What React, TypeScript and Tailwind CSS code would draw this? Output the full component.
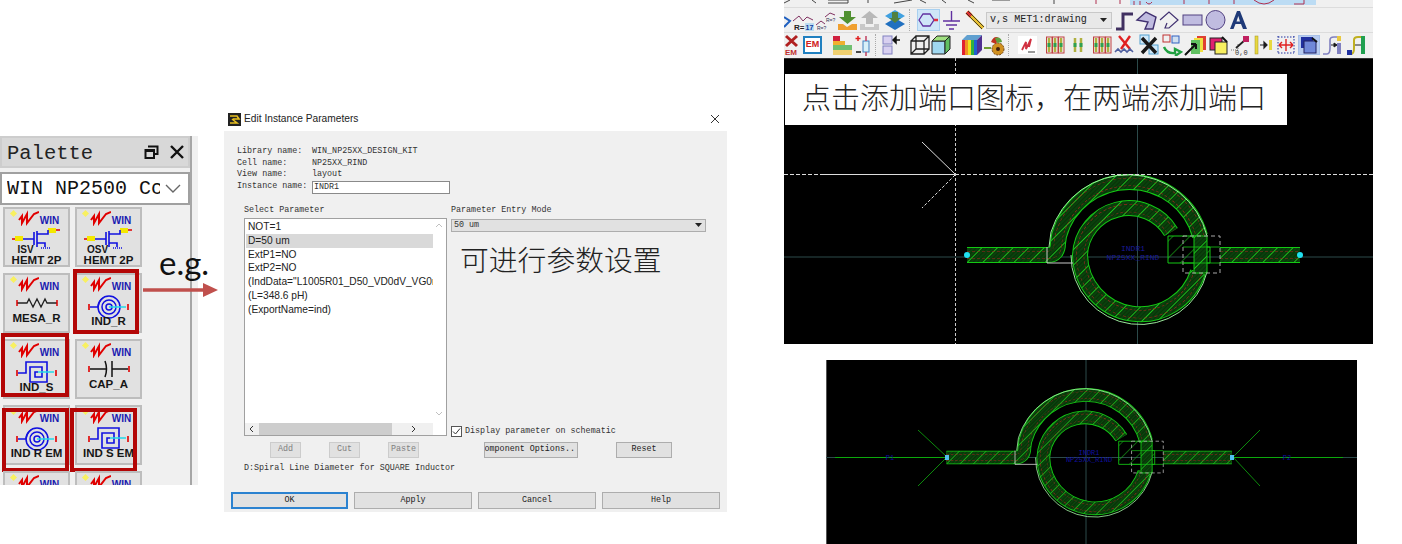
import React from "react";

const mono = "font-['Liberation_Mono',monospace]";
const sans = "font-['Liberation_Sans',sans-serif]";
const cjk = "font-['Liberation_Sans','Noto_Sans_CJK_SC',sans-serif]";

// --- PALETTE ---

function WinLogo() {
  return (
    <div className="flex h-[17px] items-end justify-center gap-[1px] pl-[4px]">
      <svg width="21" height="16" viewBox="0 0 21 16">
        <path d="M1 10 L4 6 L4 13 L9 4 L9 13 L16 4 L21 2" fill="none" stroke="#e00000" strokeWidth="2" />
      </svg>
      <span className={`${sans} text-[10px] leading-[11px] font-bold text-[#1a1ab0]`}>WIN</span>
    </div>
  );
}

function Symbol({ kind }: { kind: string }) {
  const blue = "#1010e0";
  if (kind === "hemt") {
    return (
      <svg width="50" height="24" viewBox="0 0 50 24">
        <rect x="3" y="9" width="8" height="5" fill="#f4e800" />
        <rect x="36" y="1" width="8" height="5" fill="#f4e800" />
        <path d="M11 12 H22 M22 5 V18 M25 4 V20 M25 7 H36 V3 M25 16 H33 V20" fill="none" stroke={blue} strokeWidth="1.6" />
        <path d="M29 21 H38" stroke={blue} strokeWidth="1.5" strokeDasharray="1 1" />
        <path d="M0 12 H3 M44 3 H48" stroke="#e00000" strokeWidth="1.5" />
      </svg>
    );
  }
  if (kind === "res") {
    return (
      <svg width="44" height="20" viewBox="0 0 44 20">
        <path d="M2 10 H12 L14 6 L18 14 L22 6 L26 14 L30 6 L32 10 H42" fill="none" stroke="#222" strokeWidth="1.3" />
        <path d="M2 7 V13 M42 7 V13" stroke="#e00000" strokeWidth="1.5" />
      </svg>
    );
  }
  if (kind === "cap") {
    return (
      <svg width="44" height="20" viewBox="0 0 44 20">
        <path d="M3 10 H19 M25 10 H41 M25 2 V18" fill="none" stroke="#111" strokeWidth="1.5" />
        <path d="M18 2 Q21 10 18 18" fill="none" stroke="#111" strokeWidth="1.5" />
        <path d="M2 7 V13 M42 7 V13" stroke="#e00000" strokeWidth="1.6" />
      </svg>
    );
  }
  if (kind === "spiral") {
    return (
      <svg width="44" height="26" viewBox="0 0 44 26">
        <path d="M3 14 H11 Q12 8 16 5" fill="none" stroke={blue} strokeWidth="1.5" />
        <circle cx="22" cy="14" r="11" fill="none" stroke={blue} strokeWidth="1.5" />
        <circle cx="22" cy="14" r="7" fill="none" stroke={blue} strokeWidth="1.5" />
        <circle cx="22" cy="14" r="3" fill="none" stroke={blue} strokeWidth="1.5" />
        <path d="M22 14 H39" stroke="#20d8e8" strokeWidth="1.5" />
        <path d="M2 11 V17 M41 11 V17" stroke="#e00000" strokeWidth="1.6" />
      </svg>
    );
  }
  return (
    <svg width="44" height="26" viewBox="0 0 44 26">
      <path d="M3 14 H11 V3 H32 V23 H15 V8 H27 V18 H20 V13 H23" fill="none" stroke={blue} strokeWidth="1.6" />
      <path d="M23 13 H39" stroke="#20d8e8" strokeWidth="1.5" />
      <path d="M2 11 V17 M41 11 V17" stroke="#e00000" strokeWidth="1.6" />
    </svg>
  );
}

function PaletteCell({
  kind,
  label,
  sub,
  frame,
}: {
  kind?: string;
  label?: string;
  sub?: string;
  frame?: string;
}) {
  const short = kind === "res" || kind === "cap";
  return (
    <div className="relative h-[60px] w-[67px] border-2 border-[#bdbdbd] bg-[#e1e1e1]">
      <div className="absolute top-[2px] left-[6px] h-[5px] w-[5px] rotate-45 bg-[#f8f060]" />
      <WinLogo />
      {kind && (
        <div className={`flex justify-center pt-[1px] ${short ? "h-[21px]" : "h-[24px]"}`}>
          <Symbol kind={kind} />
        </div>
      )}
      <div className={`${sans} relative text-center text-[11.5px] leading-[11px] font-bold text-[#161616]`}>
        {sub && <div className="-mt-[5px] pr-[22px] text-[10px] leading-[10px]">{sub}</div>}
        {label}
      </div>
      {frame && <div className={`absolute border-[4px] border-[#b30606] ${frame}`} />}
    </div>
  );
}

function Palette() {
  return (
    <div className="absolute top-[136px] left-0 h-[349px] w-[198px] overflow-hidden bg-[#f0f0f0]">
      <div className="h-full w-[192px] border-r-2 border-[#a6a6a6]">
        <div className="flex h-[32px] items-center border-2 border-[#cdcdcd] bg-[#d8d8d8] pr-[3px] pl-[5px]">
          <span className={`${mono} flex-1 pt-[3px] text-[20.5px] leading-[24px] text-[#222]`}>Palette</span>
          <svg width="15" height="15" viewBox="0 0 15 15" className="mr-[11px]">
            <path d="M4 1.5 H13.5 V9 H10 M1.5 5 H10 V13 H1.5 Z M1.5 6 H10" fill="none" stroke="#111" strokeWidth="2" />
          </svg>
          <svg width="14" height="14" viewBox="0 0 14 14" className="mr-[1px]">
            <path d="M1 1 L13 13 M13 1 L1 13" stroke="#111" strokeWidth="2.4" />
          </svg>
        </div>
        <div className="mt-[4px] flex h-[33px] items-center border-2 border-[#a0a0a0] bg-white pl-[5px]">
          <span className={`${mono} w-[153px] overflow-hidden text-[20px] whitespace-nowrap text-[#111]`}>WIN NP2500 Cc</span>
          <svg width="16" height="10" viewBox="0 0 16 10" className="ml-[5px]">
            <path d="M1 1 L8 8 L15 1" fill="none" stroke="#666" strokeWidth="1.4" />
          </svg>
        </div>
        <div className="mt-[2px] grid grid-cols-[67px_67px] gap-x-[5px] gap-y-[6px] pl-[3px]">
          <PaletteCell kind="hemt" sub="ISV" label="HEMT 2P" />
          <PaletteCell kind="hemt" sub="OSV" label="HEMT 2P" />
          <PaletteCell kind="res" label="MESA_R" />
          <PaletteCell kind="spiral" label="IND_R" frame="-top-[6px] -left-[4px] h-[65px] w-[66px]" />
          <PaletteCell kind="square" label="IND_S" frame="-top-[8px] -left-[4px] h-[64px] w-[68px]" />
          <PaletteCell kind="cap" label="CAP_A" />
          <PaletteCell kind="spiral" label="IND R EM" frame="top-[1px] -left-[3px] h-[64px] w-[67px]" />
          <PaletteCell kind="square" label="IND S EM" frame="top-[1px] -left-[7px] h-[64px] w-[67px]" />
          <PaletteCell />
          <PaletteCell />
        </div>
      </div>
    </div>
  );
}

// --- DIALOG ---

function DlgButton({
  label,
  width,
  disabled,
  primary,
}: {
  label: string;
  width: string;
  disabled?: boolean;
  primary?: boolean;
}) {
  return (
    <div
      className={`${mono} flex items-center justify-center overflow-hidden border text-[8.4px] whitespace-nowrap ${width} ${
        primary ? "border-2 border-[#2b82d0] bg-[#e1e1e1]" : "border-[#adadad] bg-[#e1e1e1]"
      } ${disabled ? "border-[#cccccc] bg-[#cccccc] text-[#808080]" : "text-[#222]"}`}
    >
      {label}
    </div>
  );
}

const params = [
  "NOT=1",
  "D=50 um",
  "ExtP1=NO",
  "ExtP2=NO",
  '(IndData="L1005R01_D50_VD0dV_VG0mV',
  "(L=348.6 pH)",
  "(ExportName=ind)",
];

function EditDialog() {
  return (
    <div className="absolute top-[105px] left-[224px] h-[407px] w-[503px] bg-white">
      <div className="flex h-[26px] items-center pt-[2px] pl-[4px]">
        <svg width="13" height="13" viewBox="0 0 13 13">
          <rect width="13" height="13" fill="#222" />
          <path d="M2 3 H9 L11 6 H5 M4 6 L9 10 H2" fill="none" stroke="#e8c020" strokeWidth="1.6" />
        </svg>
        <span className={`${sans} ml-[3px] flex-1 text-[10.2px] text-[#222]`}>Edit Instance Parameters</span>
        <svg width="10" height="10" viewBox="0 0 10 10" className="mr-[7px]">
          <path d="M1 1 L9 9 M9 1 L1 9" stroke="#333" strokeWidth="1" />
        </svg>
      </div>
      <div className={`${mono} h-[381px] bg-[#f0f0f0] text-[8.4px] text-[#333]`}>
        <div className="pt-[15px] pl-[13px] leading-[11.6px]">
          <div className="flex"><span className="w-[75px]">Library name:</span>WIN_NP25XX_DESIGN_KIT</div>
          <div className="flex"><span className="w-[75px]">Cell name:</span>NP25XX_RIND</div>
          <div className="flex"><span className="w-[75px]">View name:</span>layout</div>
          <div className="flex items-center">
            <span className="w-[75px]">Instance name:</span>
            <div className="flex h-[13px] w-[138px] items-center border border-[#8a8a8a] bg-white pl-[1px] leading-[10px]">INDR1</div>
          </div>
        </div>
        <div className="mt-[11px] flex pl-[20px]">
          <div className="w-[207px]">
            <div className="h-[13px] leading-[11px]">Select Parameter</div>
            <div className="relative h-[218px] w-[203px] overflow-hidden border border-[#a0a0a0] bg-white">
              <div className={`${sans} pt-[1px] pl-[1px] text-[10.2px] leading-[13.9px] text-[#222]`}>
                {params.map((p, i) => (
                  <div
                    key={p}
                    className={`h-[13.9px] w-[187px] overflow-hidden pl-[2px] whitespace-nowrap ${i === 1 ? "bg-[#d9d9d9]" : ""}`}
                  >
                    {p}
                  </div>
                ))}
              </div>
              {/* vertical scrollbar arrows */}
              <svg width="8" height="5" viewBox="0 0 8 5" className="absolute top-[4px] right-[3px]">
                <path d="M1 4 L4 1 L7 4" fill="none" stroke="#c0c0c0" />
              </svg>
              <svg width="8" height="5" viewBox="0 0 8 5" className="absolute right-[3px] bottom-[19px]">
                <path d="M1 1 L4 4 L7 1" fill="none" stroke="#c0c0c0" />
              </svg>
              {/* horizontal scrollbar */}
              <div className="absolute bottom-0 left-0 flex h-[12px] w-[188px] items-center bg-[#f0f0f0]">
                <svg width="14" height="8" viewBox="0 0 14 8">
                  <path d="M8 1 L5 4 L8 7" fill="none" stroke="#333" />
                </svg>
                <div className="h-[12px] w-[133px] bg-[#cdcdcd]" />
                <svg width="30" height="8" viewBox="0 0 30 8">
                  <path d="M20 1 L23 4 L20 7" fill="none" stroke="#333" />
                </svg>
              </div>
            </div>
          </div>
          <div className="relative w-[255px]">
            <div className="h-[14px] leading-[11px] whitespace-nowrap">Parameter Entry Mode</div>
            <div className="flex h-[13px] items-center justify-between border border-[#adadad] bg-[#e1e1e1] pr-[3px] pl-[2px]">
              50 um
              <svg width="7" height="4" viewBox="0 0 7 4">
                <path d="M0 0 H7 L3.5 4 Z" fill="#222" />
              </svg>
            </div>
            <div className={`${cjk} pt-[11px] pl-[9px] text-[28.8px] leading-[36px] font-light text-[#222]`}>可进行参数设置</div>
            <div className="absolute top-[220px] left-0 flex items-center">
              <div className="flex h-[11px] w-[11px] items-center justify-center border border-[#555] bg-white">
                <svg width="9" height="9" viewBox="0 0 9 9">
                  <path d="M1 4.5 L3.5 7 L8 1.5" fill="none" stroke="#333" />
                </svg>
              </div>
              <span className="ml-[3px]">Display parameter on schematic</span>
            </div>
          </div>
        </div>
        <div className="mt-[6px] flex h-[16px] pl-[46px]">
          <DlgButton label="Add" width="w-[31px]" disabled />
          <div className="w-[28px]" />
          <DlgButton label="Cut" width="w-[31px]" disabled />
          <div className="w-[28px]" />
          <DlgButton label="Paste" width="w-[31px]" disabled />
          <div className="w-[65px]" />
          <div className={`${mono} flex w-[94px] items-center justify-end overflow-hidden border border-[#adadad] bg-[#e1e1e1] pr-[2px] whitespace-nowrap text-[#222]`}>
            omponent Options..
          </div>
          <div className="w-[38px]" />
          <DlgButton label="Reset" width="w-[56px]" />
        </div>
        <div className="pt-[5px] pl-[20px] leading-[10px]">D:Spiral Line Diameter for SQUARE Inductor</div>
        <div className="mt-[19px] flex h-[17px] gap-[6px] pl-[7px]">
          <DlgButton label="OK" width="w-[117px]" primary />
          <DlgButton label="Apply" width="w-[118px]" />
          <DlgButton label="Cancel" width="w-[118px]" />
          <DlgButton label="Help" width="w-[118px]" />
        </div>
      </div>
    </div>
  );
}

// --- TOOLBAR ---

function Ic({ w, children }: { w: number; children?: React.ReactNode }) {
  return (
    <svg width={w} height="22" viewBox={`0 0 ${w} 22`} className="shrink-0">
      {children}
    </svg>
  );
}

function Sep() {
  return <div className="mx-[3px] h-[22px] w-[3px] shrink-0 border-l border-dotted border-[#aaa]" />;
}

function Bars({ w, n, framed }: { w: number; n: number; framed?: boolean }) {
  const out = [];
  for (let i = 0; i < n; i++) {
    const x = 3 + i * 6;
    out.push(
      <g key={i}>
        {framed && <rect x={x - 1.5} y="3" width="5.5" height="16" fill="none" stroke="#c04040" />}
        <path d={`M${x + 1} 4 V18`} stroke="#b0b040" strokeWidth="2.5" />
        <rect x={x - 0.5} y="9" width="3" height="4" fill="#30a050" />
      </g>
    );
  }
  return <Ic w={w}>{out}</Ic>;
}

function Toolbar() {
  return (
    <div className="h-[58px] bg-[#f0f0f0]">
      {/* row cut off at the top of the picture */}
      <div className="relative h-[8px] overflow-hidden border-b border-[#dcdcdc]">
        <div className="absolute top-0 left-[346px] h-[5px] w-[186px] bg-[#bcdcf4]" />
        <svg width="589" height="7" viewBox="0 0 589 7" className="absolute top-0 left-0">
          <path d="M0 3 L6 0 M28 0 L32 3 M44 0 H64 V3 H44 M84 0 V3 M110 3 L128 0 M136 0 L142 3 M158 0 L162 3 M184 0 L190 3 M208 0 H226 M270 0 V4" stroke="#444" fill="none" />
          <path d="M312 0 V4 M336 0 V4 M350 1 V5 M356 1 V5 M362 2 Q365 6 368 2 M400 0 V4 M425 0 V4 M450 0 V4 M470 0 Q480 8 490 0 M510 4 H520 V0" stroke="#b03050" fill="none" />
        </svg>
      </div>
      <div className="flex h-[25px] items-center border-b border-[#dcdcdc]">
        <Ic w={9}>
          <path d="M0 8 L6 12 L0 18" fill="none" stroke="#2060c0" strokeWidth="2" />
        </Ic>
        <Ic w={22}>
          <path d="M0 12 L6 7 L10 12 L14 8 L20 11" fill="none" stroke="#803060" />
          <text x="1" y="21" fontSize="8" fontWeight="700" fill="#222" fontFamily="Liberation Sans">R=</text>
          <rect x="12" y="14" width="9" height="8" fill="#bcdcf0" />
          <text x="12.5" y="21" fontSize="7" fontWeight="700" fill="#1040a0" fontFamily="Liberation Sans">17</text>
        </Ic>
        <Ic w={21}>
          <path d="M1 16 L6 12 L10 15 M10 8 L15 4 L20 6" fill="none" stroke="#803060" />
          <text x="2" y="21" fontSize="5" fill="#335" fontFamily="Liberation Sans">R=?</text>
          <text x="11" y="13" fontSize="5" fill="#335" fontFamily="Liberation Sans">R=?</text>
        </Ic>
        <Ic w={22}>
          <path d="M8 2 H15 V8 H20 L11.5 15 L3 8 H8 Z" fill="#509030" />
          <path d="M2 15 H7 L11 18 L16 15 H21 V21 H2 Z" fill="#f0a030" />
        </Ic>
        <Ic w={23}>
          <path d="M11.5 2 L20 9 H15 V15 H8 V9 H3 Z" fill="#b8b8b8" />
          <path d="M2 15 H7 V18 H16 V15 H21 V21 H2 Z" fill="#c8c8c8" />
        </Ic>
        <div className="w-[3px] shrink-0" />
        <Ic w={22}>
          <path d="M1 15 L11 9 L21 15 L11 21 Z" fill="#2070c0" />
          <path d="M1 7 L11 1 L21 7 L11 13 Z" fill="#40a0e0" />
          <path d="M8 3 H14 V9 H17 L11 14 L5 9 H8 Z" fill="#508040" />
        </Ic>
        <Sep />
        <div className="ml-[2px] flex h-[22px] w-[23px] shrink-0 items-center justify-center border border-[#a8d0f0] bg-[#cfe6f8]">
          <svg width="21" height="14" viewBox="0 0 21 14">
            <path d="M1 7 L5 1 H12 L16 7 L12 13 H5 Z" fill="none" stroke="#6030a0" strokeWidth="1.3" />
            <path d="M16 7 H20" stroke="#e03040" strokeWidth="2.5" />
          </svg>
        </div>
        <Ic w={23}>
          <path d="M11.5 2 V12 M3 12 H20 M6 16 H17 M9 20 H14" stroke="#6030a0" strokeWidth="1.4" />
        </Ic>
        <Ic w={22}>
          <path d="M4 3 L20 19" stroke="#e8c030" strokeWidth="4" />
          <path d="M4 3 L8 7" stroke="#e03030" strokeWidth="4" />
          <path d="M3 4 L19 20 M5 2 L21 18" stroke="#222" strokeWidth="0.8" />
        </Ic>
        <div className="ml-[1px] flex h-[17px] w-[126px] shrink-0 items-center justify-between border border-[#c8c8c8] bg-[#e8e8e8] pr-[4px] pl-[3px]">
          <span className={`${mono} text-[10.1px] text-[#222]`}>v,s MET1:drawing</span>
          <svg width="7" height="4" viewBox="0 0 7 4">
            <path d="M0 0 H7 L3.5 4 Z" fill="#222" />
          </svg>
        </div>
        <Ic w={22}>
          <path d="M4 20 H11 V5 H21" fill="none" stroke="#403060" strokeWidth="3" />
        </Ic>
        <Ic w={24}>
          <path d="M3 11 L12 3 L22 8 L19 20 L11 20 L14 13 Z" fill="#c0bce0" stroke="#403070" strokeWidth="1.4" />
        </Ic>
        <Ic w={23}>
          <path d="M2 11 L11 3 L20 11 L11 19 L7 19 L9 14" fill="none" stroke="#403070" strokeWidth="1.2" />
        </Ic>
        <Ic w={23}>
          <rect x="2" y="6" width="19" height="10" fill="#c0bce0" stroke="#504080" />
        </Ic>
        <Ic w={23}>
          <circle cx="11.5" cy="11" r="9.5" fill="#c0bce0" stroke="#504080" />
        </Ic>
        <Ic w={23}>
          <path d="M3 20 L10 2 H13 L20 20 H16 L14 15 H8.5 L6.5 20 Z M9.5 12.5 H13 L11.3 7 Z" fill="#1f3a78" fillRule="evenodd" />
        </Ic>
      </div>
      <div className="flex h-[24px] items-center">
        <Ic w={15}>
          <path d="M2 2 L13 12 M13 2 L2 12" stroke="#b02020" strokeWidth="3" />
          <text x="1" y="21" fontSize="8" fontWeight="700" fill="#c03030" fontFamily="Liberation Sans">EM</text>
        </Ic>
        <div className="ml-[4px] flex h-[18px] w-[19px] shrink-0 items-center justify-center border-2 border-[#2080c0] bg-white">
          <span className={`${sans} text-[9px] font-bold text-[#d02020]`}>EM</span>
        </div>
        <div className="w-[10px] shrink-0" />
        <Ic w={21}>
          <rect x="1" y="2" width="7" height="5" fill="#d02040" />
          <rect x="1" y="7" width="12" height="4" fill="#f0b030" />
          <rect x="1" y="11" width="19" height="5" fill="#70c070" />
          <rect x="1" y="16" width="19" height="5" fill="#f0d070" />
        </Ic>
        <Ic w={19}>
          <path d="M5 2 V7 M2.5 4.5 H7.5" stroke="#e02020" strokeWidth="1.5" />
          <path d="M3 18 H8" stroke="#111" strokeWidth="1.5" />
          <rect x="10" y="7" width="6" height="11" fill="#d8f0f8" stroke="#4080c0" />
          <path d="M13 2 V7 M13 18 V22" stroke="#c04060" strokeWidth="1.5" />
        </Ic>
        <Sep />
        <Ic w={20}>
          <rect x="2" y="2" width="9" height="8" fill="#d8d0f0" stroke="#8080c0" />
          <rect x="2" y="12" width="9" height="8" fill="#d8d0f0" stroke="#8080c0" />
          <path d="M12 6 H19 M12 6 L15 3 V9 Z" stroke="#111" strokeWidth="1.5" />
        </Ic>
        <div className="w-[8px] shrink-0" />
        <Ic w={21}>
          <path d="M2 7 H15 V20 H2 Z M7 2 H20 V15 H7 Z M2 7 L7 2 M15 7 L20 2 M15 20 L20 15 M2 20 L7 15" fill="none" stroke="#222" strokeWidth="1.3" />
        </Ic>
        <Ic w={22}>
          <path d="M2 7 H15 V20 H2 Z" fill="#a0d8f0" stroke="#222" />
          <path d="M15 7 L20 2 V15 L15 20 Z" fill="#60c060" stroke="#222" />
          <path d="M2 7 L7 2 H20 L15 7 Z" fill="#a0e080" stroke="#222" />
        </Ic>
        <div className="w-[7px] shrink-0" />
        <Ic w={24}>
          <rect x="3" y="6" width="3" height="15" fill="#e02030" />
          <rect x="6" y="6" width="3" height="15" fill="#f09020" />
          <rect x="9" y="6" width="3" height="15" fill="#f0e020" />
          <rect x="12" y="6" width="3" height="15" fill="#30b040" />
          <rect x="15" y="6" width="3" height="15" fill="#2060d0" />
          <path d="M3 6 L8 1 H23 L18 6 Z" fill="#60a0d0" />
          <path d="M18 6 L23 1 V16 L18 21 Z" fill="#503090" />
        </Ic>
        <Ic w={22}>
          <circle cx="15" cy="15" r="6" fill="#d09020" stroke="#704010" strokeDasharray="2 1" />
          <circle cx="15" cy="15" r="2" fill="#402010" />
          <path d="M8 8 Q11 1 16 4 L13 10 Z" fill="#c03020" />
          <path d="M12 4 Q18 2 19 8 L14 9 Z" fill="#60a040" />
          <path d="M1 14 H8" stroke="#70a030" strokeWidth="2" />
        </Ic>
        <Sep />
        <div className="w-[4px] shrink-0" />
        <div className="flex h-[18px] w-[19px] shrink-0 items-center justify-center bg-white">
          <svg width="17" height="17" viewBox="0 0 17 17">
            <path d="M3 13 L7 5 L7 12 L12 2 L10 10" fill="none" stroke="#d03040" strokeWidth="1.8" />
            <path d="M9 15 H16" stroke="#777" strokeWidth="1.5" />
          </svg>
        </div>
        <div className="w-[8px] shrink-0" />
        <Bars w={21} n={3} framed />
        <div className="w-[5px] shrink-0" />
        <Bars w={15} n={2} />
        <div className="w-[6px] shrink-0" />
        <Bars w={21} n={3} framed />
        <Ic w={22}>
          <path d="M6 2 L17 15 M17 2 L8 15" stroke="#e02020" strokeWidth="2.4" />
          <path d="M2 18 L5 15 L8 18 L11 15 L14 18 L17 15 L20 18" fill="none" stroke="#5060a0" strokeWidth="1.6" />
        </Ic>
        <div className="w-[3px] shrink-0" />
        <Ic w={22}>
          <rect x="2" y="1" width="9" height="9" fill="#d0e8f8" stroke="#50a0d0" />
          <rect x="11" y="11" width="9" height="9" fill="#d0e8f8" stroke="#50a0d0" />
          <path d="M4 4 L18 19 M18 4 L4 19" stroke="#181818" strokeWidth="3.4" />
        </Ic>
        <div className="w-[1px] shrink-0" />
        <Ic w={22}>
          <rect x="2" y="1" width="7" height="7" fill="#f0f0f0" stroke="#c03030" />
          <rect x="11" y="2" width="7" height="7" fill="#d0e0f0" stroke="#3060c0" />
          <path d="M3 13 Q6 20 14 19 L14 15 L20 18 L14 22" fill="none" stroke="#20a040" strokeWidth="2.4" />
        </Ic>
        <Ic w={25}>
          <rect x="14" y="2" width="9" height="14" fill="#e04030" />
          <rect x="11" y="4" width="9" height="14" fill="#f0e040" />
          <rect x="8" y="6" width="9" height="14" fill="#60c060" />
          <path d="M2 21 L13 10 M13 10 H8 M13 10 V15" stroke="#111" strokeWidth="2" />
        </Ic>
        <Ic w={20}>
          <rect x="2" y="4" width="12" height="12" fill="#e02070" stroke="#222" />
          <rect x="7" y="8" width="12" height="12" fill="#f8f060" stroke="#222" />
          <path d="M14 3 L19 8" stroke="#111" strokeWidth="2" />
        </Ic>
        <Ic w={24}>
          <path d="M3 16 H10 V9" fill="none" stroke="#777" strokeDasharray="1 1" />
          <path d="M8 14 L17 6" stroke="#222" strokeWidth="1.8" />
          <rect x="15" y="2" width="6" height="6" fill="#c02060" />
          <text x="7" y="21" fontSize="7" fill="#333" fontFamily="Liberation Mono">0,0</text>
        </Ic>
        <Ic w={21}>
          <rect x="3" y="2" width="3" height="18" fill="#e8d840" stroke="#a09020" strokeWidth="0.5" />
          <rect x="17" y="6" width="3" height="10" fill="#e8d840" />
          <path d="M8 11 H15 M15 11 L12 8 V14 Z" stroke="#222" strokeWidth="1.2" />
        </Ic>
        <div className="w-[2px] shrink-0" />
        <Ic w={22}>
          <path d="M3 2 V20 M19 2 V20 M3 3 H19 M3 19 H19" fill="none" stroke="#2030a0" strokeDasharray="1.5 1.5" />
          <path d="M4 11 H18 M11 5 V17 M4 11 L7 8 M4 11 L7 14 M18 11 L15 8 M18 11 L15 14" stroke="#e02020" strokeWidth="1.4" fill="none" />
        </Ic>
        <div className="ml-[1px] flex h-[20px] w-[22px] shrink-0 items-center justify-center border border-[#a8c0e8] bg-[#b8ccf0]">
          <svg width="18" height="18" viewBox="0 0 18 18">
            <rect x="1" y="1" width="12" height="11" fill="#2030a0" />
            <rect x="4" y="5" width="12" height="12" fill="#7088d8" stroke="#202060" />
            <path d="M12 2 L17 6" stroke="#111" strokeWidth="2" />
          </svg>
        </div>
        <Ic w={24}>
          <path d="M3 20 H7 Q10 20 10 14 V6 Q10 3 14 3 H17" fill="none" stroke="#8080c0" strokeWidth="1.6" />
          <path d="M11 11 H17 M17 11 L14 9 V13 Z" stroke="#222" />
          <rect x="17" y="2" width="4" height="5" fill="#e8c840" />
          <rect x="17" y="9" width="4" height="11" fill="#8080c0" />
        </Ic>
        <Ic w={24}>
          <path d="M3 20 H7 Q10 20 10 14 V6 Q10 3 14 3 H17" fill="none" stroke="#c0b020" strokeWidth="2" />
          <path d="M11 11 H17" stroke="#222" />
          <rect x="17" y="2" width="4" height="18" fill="#20a050" />
          <rect x="3" y="16" width="5" height="5" fill="#2030a0" />
        </Ic>
      </div>
    </div>
  );
}

// --- LAYOUT DRAWING ---

function LayoutDefs() {
  return (
    <defs>
      <pattern id="hatch" width="11" height="11" patternUnits="userSpaceOnUse" patternTransform="rotate(-45)">
        <rect width="11" height="11" fill="#083208" />
        <path d="M0 3 H11 M0 6 H11 M0 9 H11" stroke="#0f5c12" strokeWidth="0.7" />
        <path d="M0 0.5 H11" stroke="#1cc01c" strokeWidth="1" />
      </pattern>
      <pattern id="lines" width="12" height="12" patternUnits="userSpaceOnUse" patternTransform="rotate(-45)">
        <path d="M0 0 H12" stroke="#18a818" strokeWidth="1.3" />
      </pattern>
    </defs>
  );
}

const trackPath =
  "M967 255 H1048 Q1058 255 1058 243 L1059 236 A73 73 0 0 1 1200 236 M1198 272 A60.4 60.4 0 0 1 1080 255 A49 49 0 0 1 1171 232 M1220 255 H1300";

function Spiral() {
  return (
    <g fill="none">
      <path d={trackPath} stroke="#14c814" strokeWidth="16" />
      <path d={trackPath} stroke="url(#hatch)" strokeWidth="14" />
      <path d={trackPath} stroke="#a82020" strokeWidth="8.2" strokeDasharray="3 2" />
      <path d={trackPath} stroke="url(#hatch)" strokeWidth="7.2" />
      {/* lighter outline on the outer edge */}
      <path d="M1049 247 L1051 232 A81 81 0 0 1 1207 236 M1207 272 A69 69 0 0 1 1071 255" stroke="#9ae89a" strokeWidth="1" />
      <path d="M1047 263 H1073 M1047 247 V263" stroke="#c8c8c8" strokeWidth="1" />
      {/* underpass block at the crossing */}
      <path d="M1168 236 H1196 V247 H1210 V263 H1168 Z" fill="url(#lines)" stroke="#14c814" strokeWidth="1" />
      <rect x="1194" y="236" width="13" height="37" fill="url(#hatch)" stroke="#14c814" strokeWidth="1" />
      <rect x="1183" y="236" width="37" height="37" stroke="#a8a8a8" strokeWidth="1" strokeDasharray="4 3" />
      <path d="M1183 247 H1220 M1183 263 H1220" stroke="#14c814" strokeWidth="0.8" />
    </g>
  );
}

function LayoutCanvas() {
  return (
    <div className="relative h-[286px] bg-black">
      <svg width="589" height="286" viewBox="784 58 589 286" className="absolute inset-0">
        <LayoutDefs />
        <path d="M784 58.5 H1373" stroke="#333" strokeWidth="1" />
        <path d="M1137.5 58 V344 M784 257 H1373" stroke="#2c4a4a" strokeWidth="1" />
        <Spiral />
        <path d="M784 174.5 H824 M955 174.5 H1373" stroke="#ddd" strokeWidth="1" strokeDasharray="4 2" />
        <path d="M824 174.5 H955" stroke="#ddd" strokeWidth="1" />
        <path d="M955.5 58 V344" stroke="#ccc" strokeWidth="1" strokeDasharray="3 2" />
        <path d="M922 142 L955 174" stroke="#ddd" strokeWidth="1" />
        <path d="M955 175 L922 208" stroke="#ddd" strokeWidth="1" strokeDasharray="3 2" />
        <text x="1133" y="251" textAnchor="middle" fontSize="8" fill="#1a1a9c" fontFamily="Liberation Mono">INDR1</text>
        <text x="1133" y="260" textAnchor="middle" fontSize="8" fill="#1a1a9c" fontFamily="Liberation Mono">NP25XX_RIND</text>
        <circle cx="967" cy="255" r="3" fill="#20e0f0" />
        <circle cx="1300" cy="255" r="3" fill="#20e0f0" />
      </svg>
      <div className={`${cjk} absolute top-[16px] left-[1px] flex h-[51px] w-[502px] items-center bg-white pl-[17px] text-[29px] font-light text-[#222]`}>
        点击添加端口图标，在两端添加端口
      </div>
    </div>
  );
}

function PortCanvas() {
  return (
    <div className="absolute top-[360px] left-[826px] h-[184px] w-[531px] bg-black">
      <svg width="531" height="184" viewBox="826 360 531 184" className="block">
        <LayoutDefs />
        <path d="M826.5 360 V544" stroke="#555" strokeWidth="1" />
        <path d="M1086 360 V544 M826 457.5 H1357" stroke="#2c4a4a" strokeWidth="1" />
        <g transform="translate(1093 457.5) scale(.857) translate(-1138 -255)">
          <Spiral />
        </g>
        <path d="M835 457.5 H947 M1233 457.5 H1343" stroke="#0ca80c" strokeWidth="1.2" />
        <path d="M918 430 L947 457 L918 486 M1260 430 L1233 457 L1260 486" fill="none" stroke="#0c8a0c" strokeWidth="1" />
        <text x="890" y="460" textAnchor="middle" fontSize="7" fill="#1010a0" fontFamily="Liberation Mono">P1</text>
        <text x="1287" y="460" textAnchor="middle" fontSize="7" fill="#1010a0" fontFamily="Liberation Mono">P2</text>
        <text x="1089" y="455" textAnchor="middle" fontSize="7" fill="#1010a0" fontFamily="Liberation Mono">INDR1</text>
        <text x="1089" y="461.5" textAnchor="middle" fontSize="7" fill="#1010a0" fontFamily="Liberation Mono">NP25XX_RIND</text>
        <rect x="945" y="455" width="4" height="5" fill="#50c0f0" />
        <rect x="1230" y="455" width="4" height="5" fill="#50c0f0" />
      </svg>
    </div>
  );
}

export default function App() {
  return (
    <div className="relative h-[544px] w-[1402px] overflow-hidden bg-white">
      <Palette />

      {/* e.g. label and arrow between palette and dialog */}
      <div className="absolute top-[244px] left-[159px] font-['Lato',sans-serif] text-[33px] leading-[36px] text-[#111]">e.g.</div>
      <svg width="76" height="16" viewBox="0 0 76 16" className="absolute top-[282px] left-[143px]">
        <path d="M0 8 H61" stroke="#c0504d" strokeWidth="3.5" />
        <path d="M60 1 L75 8 L60 15 Z" fill="#c0504d" />
      </svg>

      <EditDialog />

      <div className="absolute top-0 left-[784px] w-[589px]">
        <Toolbar />
        <LayoutCanvas />
      </div>

      <PortCanvas />
    </div>
  );
}
